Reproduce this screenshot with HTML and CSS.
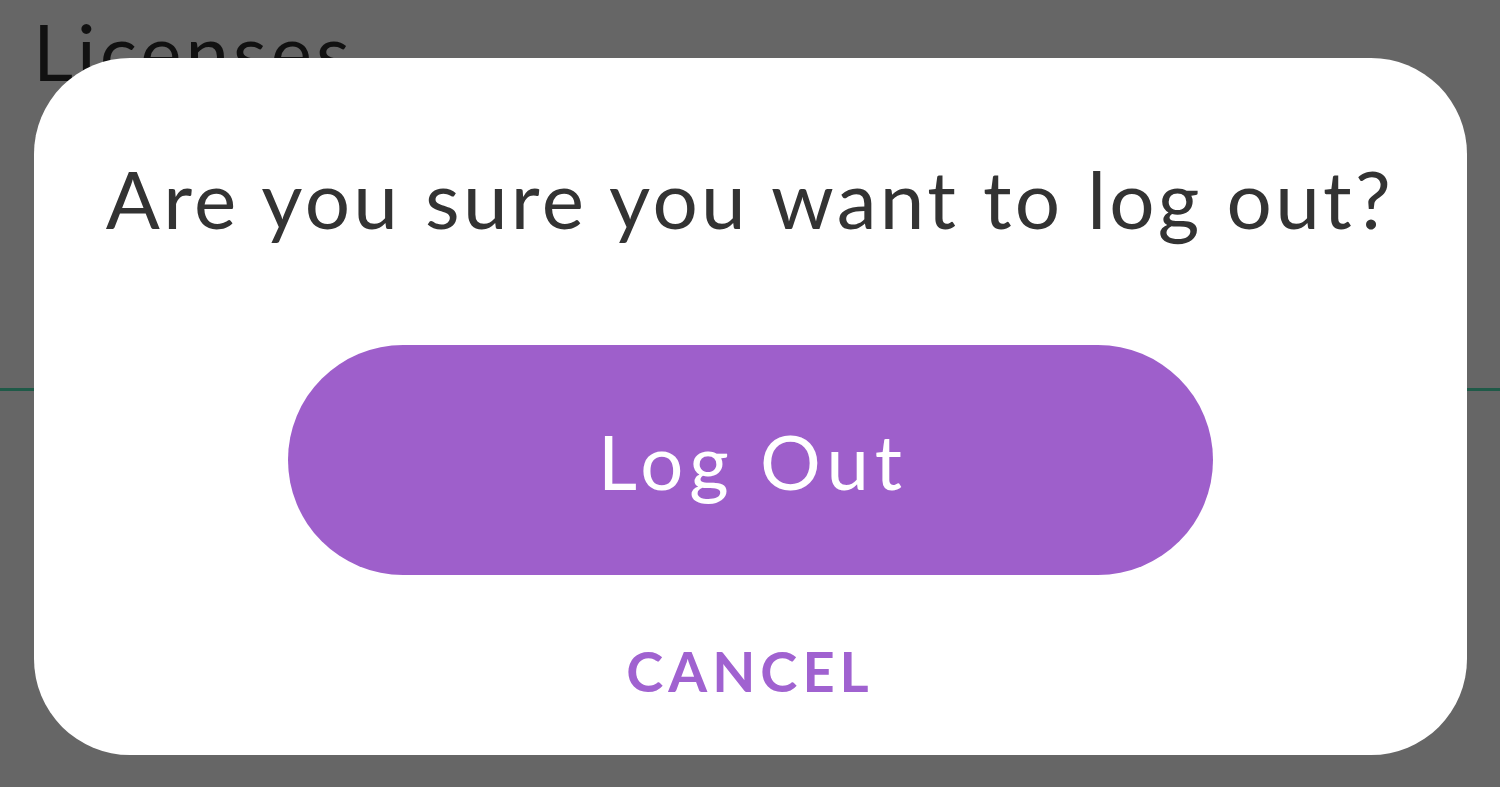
FILE: index.html
```html
<!DOCTYPE html>
<html>
<head>
<meta charset="utf-8">
<link rel="stylesheet" href="styles.css">
</head>
<body>
<div class="screen">
  <div class="page">
    <div class="page-title">Licenses</div>
    <div class="divider"></div>
  </div>
  <div class="overlay">
    <div class="modal">
      <p class="question">Are you sure you want to log out?</p>
      <button class="logout">Log Out</button>
      <button class="cancel">CANCEL</button>
    </div>
  </div>
</div>
</body>
</html>
```

FILE: styles.css
```css
html, body {
  margin: 0;
  padding: 0;
  width: 1500px;
  height: 787px;
  overflow: hidden;
  background: #666666;
  font-family: "Lato", "Noto Sans", sans-serif;
}
.screen {
  position: relative;
  width: 1500px;
  height: 787px;
}
.page {
  display: flex;
  flex-direction: column;
  height: 100%;
}
.page-title {
  font-size: 78px;
  color: #111;
  padding-left: 33px;
  line-height: 1;
  margin-top: 12px;
  letter-spacing: 4px;
}
.divider {
  margin-top: 298px;
  height: 3px;
  background: #1f5a48;
}
.overlay {
  position: absolute;
  inset: 0;
  display: flex;
  align-items: flex-start;
  justify-content: center;
  padding-top: 58px;
}
.modal {
  width: 1433px;
  height: 697px;
  box-sizing: border-box;
  background: #ffffff;
  border-radius: 96px;
  display: flex;
  flex-direction: column;
  align-items: center;
}
.question {
  margin: 100px 0 0 0;
  font-size: 80px;
  line-height: 1;
  color: #333333;
  letter-spacing: 3.3px;
}
.logout {
  margin-top: 107px;
  width: 925px;
  height: 230px;
  border: none;
  border-radius: 115px;
  background: #9e5fcb;
  color: #ffffff;
  font-family: inherit;
  font-size: 76px;
  letter-spacing: 6px;
  padding: 0 0 0 6px;
}
.cancel {
  margin-top: 62px;
  border: none;
  background: none;
  color: #a062d0;
  font-family: inherit;
  font-weight: 700;
  font-size: 56px;
  letter-spacing: 5px;
  padding: 0;
}
```
